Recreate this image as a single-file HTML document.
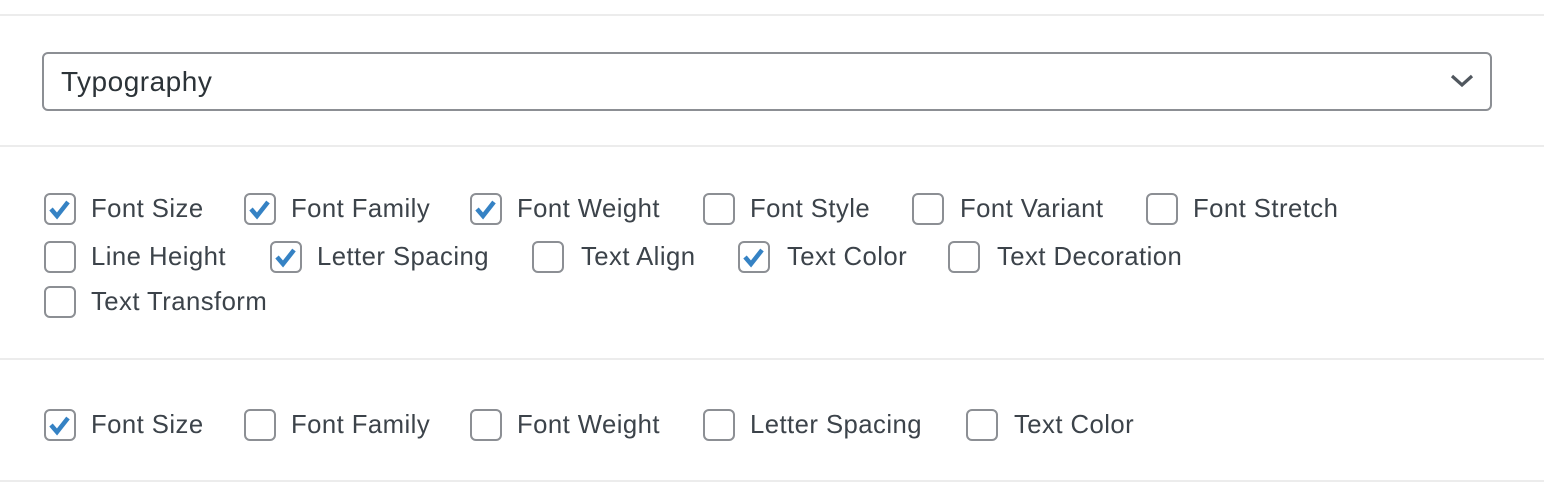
<!DOCTYPE html>
<html><head><style>
body{margin:0;width:1544px;height:500px;background:#fff;position:relative;overflow:hidden;font-family:"Liberation Sans",sans-serif;color:#3c434a}
.hr{position:absolute;left:0;width:1544px;height:2px;background:#ececec}
.sel{position:absolute;left:42px;top:52px;width:1446px;height:55px;border:2px solid #8c8f94;border-radius:6px;box-sizing:content-box}
.sel span{position:absolute;left:17px;top:12px;font-size:28px;letter-spacing:0.5px;color:#2c3338}
.cb{position:absolute;width:28px;height:28px;border:2px solid #8c8f94;border-radius:6px}
.t{position:absolute;font-size:25.7px;letter-spacing:0.45px;line-height:32px}
</style></head><body>
<div class="hr" style="top:14px"></div>
<div class="sel"><span>Typography</span>
<svg style="position:absolute;right:16px;top:17px" width="24" height="20" viewBox="0 0 24 20"><path d="M2 5 L12 14 L22 5" fill="none" stroke="#50575e" stroke-width="3.2"/></svg></div>
<div class="hr" style="top:145px"></div>
<div class="hr" style="top:358px"></div>
<div class="hr" style="top:480px"></div>
<div id="c"></div>
<script>
const items=[
[193,44,91,"Font Size",1],[193,244,291,"Font Family",1],[193,470,517,"Font Weight",1],[193,703,750,"Font Style",0],[193,912,960,"Font Variant",0],[193,1146,1193,"Font Stretch",0],
[241,44,91,"Line Height",0],[241,270,317,"Letter Spacing",1],[241,532,581,"Text Align",0],[241,738,787,"Text Color",1],[241,948,997,"Text Decoration",0],
[286,44,91,"Text Transform",0],
[409,44,91,"Font Size",1],[409,244,291,"Font Family",0],[409,470,517,"Font Weight",0],[409,703,750,"Letter Spacing",0],[409,966,1014,"Text Color",0]];
let h="";
for(const [y,cx,tx,s,c] of items){
h+=`<div class="cb" style="left:${cx}px;top:${y}px">${c?'<svg width="28" height="28" viewBox="0 0 28 28" style="position:absolute;left:0;top:0"><path d="M5 14 L11 21 L22 7" fill="none" stroke="#3582c4" stroke-width="4.5"/></svg>':''}</div><div class="t" style="left:${tx}px;top:${y}px">${s}</div>`;
}
document.getElementById("c").innerHTML=h;
</script>
</body></html>
